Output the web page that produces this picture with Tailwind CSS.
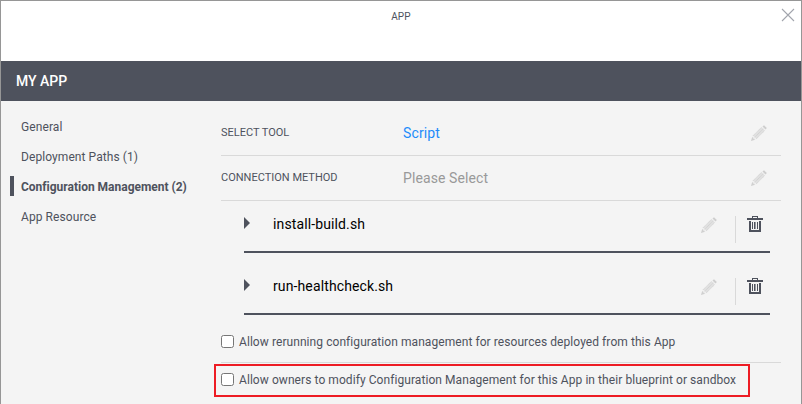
<!DOCTYPE html>
<html lang="en">
<head>
<meta charset="utf-8">
<title>App</title>
<script src="https://cdn.jsdelivr.net/npm/@tailwindcss/browser@4"></script>
</head>
<body class="h-[404px] w-[802px] overflow-hidden bg-[#f4f4f4] font-[Roboto,sans-serif] text-[#4e525d]">
<svg class="hidden">
  <symbol id="pencil" viewBox="0 0 16 16">
    <path d="M2.2 10.8 10.8 2.2 13.8 5.2 5.2 13.8Z" fill="#e0e0e0"/>
    <path d="M1.9 10.9 10.6 2.2M5.1 14.1 13.8 5.4M3.5 12.5 12.2 3.8" stroke="#cfcfcf" stroke-width=".9" stroke-dasharray="1.2 .5"/>
    <path d="M11.5 1.5 13 .2 15.8 3 14.5 4.5Z" fill="#cecece"/>
    <path d="M0 16 1.2 11.8 4.2 14.8Z" fill="#d0d0d0"/>
    <path d="M1.5 12.6 3.4 14.5 4.6 13.5 2.5 11.4Z" fill="#ececec"/>
  </symbol>
  <symbol id="trash" viewBox="0 0 16 16">
    <path d="M5 0H11V2H16V4H0V2H5ZM6 1V2H10V1Z" fill="#4e525d" fill-rule="evenodd"/>
    <path d="M2 5H14V16H2ZM4 5V14H12V5Z" fill="#4e525d" fill-rule="evenodd"/>
    <path d="M5 6H6V13H5ZM7 6H8V13H7ZM10 6H11V13H10Z" fill="#4e525d"/>
    <path d="M8 6H9V13H8Z" fill="#999ba1"/>
  </symbol>
</svg>
<div class="flex h-full flex-col border-x border-t border-[#969696]">
  <header class="flex h-[60px] shrink-0 items-start bg-white">
    <div class="w-5"></div>
    <h1 class="mt-2 flex-1 text-center text-[10px] leading-4 tracking-[0.2px]">APP</h1>
    <svg class="mt-[7px] mr-[6px] size-[14px]" viewBox="0 0 14 14"><path d="M1 1 13 13M13 1 1 13" stroke="#a2a5ad" stroke-width="1.1"/></svg>
  </header>
  <div class="flex h-10 shrink-0 items-center bg-[#4e525d] pl-[15px] text-sm font-medium text-white">MY APP</div>
  <div class="flex flex-1">
    <nav class="flex w-[220px] flex-col gap-[10px] pt-[15px] pl-[9px] text-[12px] leading-[18px]">
      <a class="pt-[2px] pl-[11px] tracking-[0.1px]">General</a>
      <a class="pt-[2px] pl-[11px] tracking-[0.08px]">Deployment Paths (1)</a>
      <a class="border-l-4 border-[#4e525d] pt-[2px] pl-[7px] font-bold tracking-[-0.01px]">Configuration Management (2)</a>
      <a class="pt-[2px] pl-[11px] tracking-[0.08px]">App Resource</a>
    </nav>
    <main class="w-[560px] pt-[10px]">
      <div class="flex h-[45px] items-center border-b border-[#d9d9d9]">
        <span class="w-[182px] text-[11px]">SELECT TOOL</span>
        <span class="flex-1 text-sm tracking-[0.12px] text-[#1e8cfa]">Script</span>
        <svg class="mr-[14px] size-4"><use href="#pencil"/></svg>
      </div>
      <div class="flex h-[45px] items-center border-b border-[#d9d9d9]">
        <span class="w-[182px] text-[11px]">CONNECTION METHOD</span>
        <span class="flex-1 text-sm tracking-[0.1px] text-[#999]">Please Select</span>
        <svg class="mr-[14px] size-4"><use href="#pencil"/></svg>
      </div>
      <ul class="mr-[11px] ml-[23px] flex flex-col gap-[10px] text-sm text-black">
        <li class="flex h-[52px] items-start border-b-2 border-[#4e525d] pt-[15px]">
          <svg class="mt-px w-[29px] h-3" viewBox="0 0 29 12"><path d="M0 0 6 6 0 12Z" fill="#4e525d"/></svg>
          <span class="-mt-[2px] flex-1 tracking-[0.12px]">install-build.sh</span>
          <svg class="mt-px size-4"><use href="#pencil"/></svg>
          <span class="mr-[11px] ml-[18px] h-[27px] w-px bg-[#d9d9d9]"></span>
          <svg class="mr-[7px] size-4"><use href="#trash"/></svg>
        </li>
        <li class="flex h-[52px] items-start border-b-2 border-[#4e525d] pt-[15px]">
          <svg class="mt-px w-[29px] h-3" viewBox="0 0 29 12"><path d="M0 0 6 6 0 12Z" fill="#4e525d"/></svg>
          <span class="-mt-[2px] flex-1 tracking-[0.12px]">run-healthcheck.sh</span>
          <svg class="mt-px size-4"><use href="#pencil"/></svg>
          <span class="mr-[11px] ml-[18px] h-[27px] w-px bg-[#d9d9d9]"></span>
          <svg class="mr-[7px] size-4"><use href="#trash"/></svg>
        </li>
      </ul>
      <label class="flex h-12 items-start border-b border-[#d9d9d9] pt-5">
        <input type="checkbox" class="size-[13px] shrink-0">
        <span class="-mt-px ml-[5px] text-[12px] leading-4 whitespace-nowrap tracking-[0.07px]">Allow rerunning configuration management for resources deployed from this App</span>
      </label>
      <label class="mt-px -ml-[7px] flex h-[33px] w-[536px] items-start border-2 border-[#ed1c24] pt-[7px] pl-[5px]">
        <input type="checkbox" class="size-[13px] shrink-0">
        <span class="-mt-px ml-[5px] text-[12px] leading-4 whitespace-nowrap tracking-[0.07px]">Allow owners to modify Configuration Management for this App in their blueprint or sandbox</span>
      </label>
    </main>
  </div>
</div>
</body>
</html>
